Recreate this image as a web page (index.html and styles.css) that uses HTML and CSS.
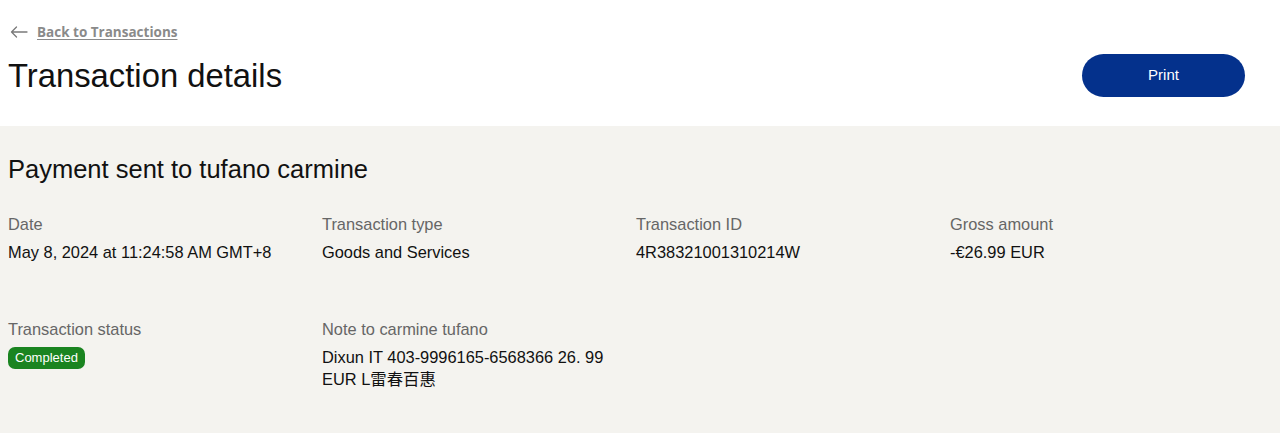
FILE: index.html
```html
<!DOCTYPE html>
<html lang="en">
<head>
<meta charset="utf-8">
<title>Transaction details</title>
<link rel="stylesheet" href="styles.css">
</head>
<body>
<header class="page-header">
  <a class="back-link" href="#">
    <svg class="back-arrow" width="18" height="12" viewBox="0 0 18 12" aria-hidden="true">
      <path d="M17 6H1.5M6.5 1L1.5 6l5 5" fill="none" stroke="#7a7a7a" stroke-width="1.3" stroke-linecap="round" stroke-linejoin="round"/>
    </svg>
    <span class="back-text">Back to Transactions</span>
  </a>
  <div class="title-row">
    <h1 class="page-title">Transaction details</h1>
    <button class="print-btn" type="button">Print</button>
  </div>
</header>
<main class="details">
  <h2 class="details-title">Payment sent to tufano carmine</h2>
  <div class="grid">
    <div class="cell">
      <div class="label">Date</div>
      <div class="value">May 8, 2024 at 11:24:58 AM GMT+8</div>
    </div>
    <div class="cell">
      <div class="label">Transaction type</div>
      <div class="value">Goods and Services</div>
    </div>
    <div class="cell">
      <div class="label">Transaction ID</div>
      <div class="value">4R38321001310214W</div>
    </div>
    <div class="cell">
      <div class="label">Gross amount</div>
      <div class="value">-€26.99 EUR</div>
    </div>
    <div class="cell">
      <div class="label">Transaction status</div>
      <div class="value"><span class="badge">Completed</span></div>
    </div>
    <div class="cell">
      <div class="label">Note to carmine tufano</div>
      <div class="value note">Dixun IT 403-9996165-6568366 26. 99 EUR L雷春百惠</div>
    </div>
  </div>
</main>
</body>
</html>
```

FILE: styles.css
```css
html, body {
  margin: 0;
  padding: 0;
}
body {
  font-family: "Liberation Sans", Arial, "Noto Sans CJK SC", sans-serif;
  color: #111;
  background: #f4f3ef;
  min-height: 433px;
}
.page-header {
  background: #fff;
  padding: 24px 35px 29px 8px;
}
.back-link {
  display: flex;
  align-items: center;
  gap: 9px;
  height: 16px;
  padding-left: 2px;
  text-decoration: none;
}
.back-text {
  font-family: "Open Sans", "Noto Sans", sans-serif;
  font-weight: 700;
  font-size: 13.5px;
  color: #8a8a8a;
  text-decoration: underline;
  text-underline-offset: 2px;
}
.title-row {
  display: flex;
  justify-content: space-between;
  align-items: flex-start;
  margin-top: 14px;
}
.page-title {
  margin: 2px 0 0 0;
  font-weight: 400;
  font-size: 32.8px;
  line-height: 40px;
  color: #111;
}
.print-btn {
  width: 163px;
  height: 43px;
  padding: 0 0 3px 0;
  border: none;
  border-radius: 22px;
  background: #04318c;
  color: #fff;
  font-family: "Liberation Sans", Arial, sans-serif;
  font-size: 15px;
  cursor: pointer;
}
.details {
  padding: 27px 8px 30px 8px;
}
.details-title {
  margin: 0;
  font-weight: 400;
  font-size: 25.5px;
  line-height: 32px;
  color: #111;
}
.grid {
  display: grid;
  grid-template-columns: repeat(4, 314px);
  row-gap: 56px;
  margin-top: 29px;
}
.label {
  font-size: 16.4px;
  line-height: 20px;
  color: #666;
}
.value {
  margin-top: 7px;
  font-size: 16.4px;
  line-height: 22px;
  color: #111;
}
.note {
  max-width: 295px;
}
.badge {
  display: inline-block;
  height: 22px;
  line-height: 22px;
  margin-top: 1px;
  padding: 0 7px;
  border-radius: 7px;
  background: #1a8420;
  color: #fff;
  font-size: 13px;
  vertical-align: top;
}
```
